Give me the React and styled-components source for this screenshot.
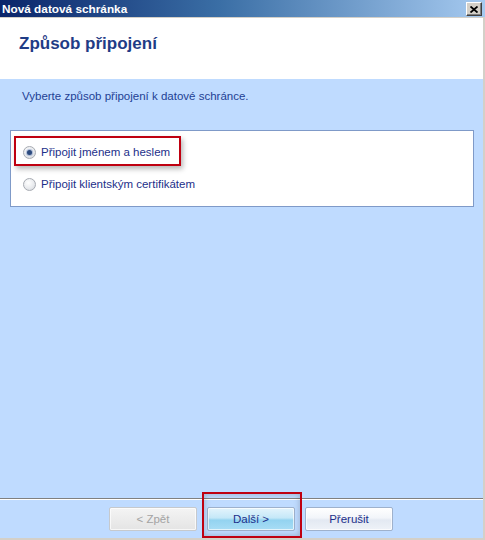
import React from 'react'
import styled, { createGlobalStyle } from 'styled-components'

const GlobalStyle = createGlobalStyle`
    html, body {
        margin: 0;
        padding: 0;
        background: #d4d0c8;
    }
    body {
        font-family: "Liberation Sans", Arial, sans-serif;
        font-size: 11.5px;
    }
`

const Window = styled.div`
    width: 485px;
    height: 540px;
    display: flex;
    flex-direction: column;
    background: #d4d0c8;
`

const TitleBar = styled.div`
    height: 17px;
    flex-shrink: 0;
    display: flex;
    align-items: center;
    justify-content: space-between;
    padding: 0 3px 0 2px;
    background: linear-gradient(to right, #0a246a 0%, #3a6ea5 45%, #a6caf0 100%);
    color: #ffffff;
    font-weight: bold;
    font-size: 11.8px;
`

const CloseButton = styled.div`
    width: 14px;
    height: 12px;
    margin-top: 1px;
    display: flex;
    align-items: center;
    justify-content: center;
    background: #d4d0c8;
    border-top: 1px solid #ffffff;
    border-left: 1px solid #ffffff;
    border-right: 1px solid #404040;
    border-bottom: 1px solid #404040;
    box-shadow: inset -1px -1px 0 #808080;
`

const Client = styled.div`
    flex: 1;
    display: flex;
    flex-direction: column;
    margin-top: 1px;
    margin-right: 2px;
    margin-bottom: 2px;
    background: #bfdbff;
`

const Header = styled.div`
    height: 61px;
    flex-shrink: 0;
    background: #ffffff;
    padding: 14px 0 0 19px;
    box-sizing: border-box;
`

const Heading = styled.h1`
    margin: 0;
    font-size: 17px;
    line-height: 24px;
    font-weight: bold;
    color: #1f3c86;
`

const Body = styled.div`
    flex: 1;
    display: flex;
    flex-direction: column;
    padding: 11px 9px 0 10px;
`

const Instruction = styled.p`
    margin: 0 0 0 12px;
    line-height: 13px;
    color: #1e3f94;
`

const OptionsPanel = styled.div`
    margin-top: 27px;
    background: #ffffff;
    border: 1px solid #7f9ac8;
    padding: 5px 3px 8px 3px;
    display: flex;
    flex-direction: column;
    gap: 2px;
`

const OptionRow = styled.label`
    display: flex;
    align-items: center;
    gap: 5px;
    align-self: flex-start;
    box-sizing: border-box;
    height: 30px;
    padding: 2px 9px 0 7px;
    border: 2px solid ${props => (props.$highlighted ? '#bf0010' : 'transparent')};
    box-shadow: ${props => (props.$highlighted ? '2px 3px 5px rgba(0, 0, 0, 0.28)' : 'none')};
    color: #1c2f8a;
`

const RadioDot = styled.span`
    width: 11px;
    height: 11px;
    border-radius: 50%;
    border: 1px solid #a7abb2;
    background: radial-gradient(circle at 40% 35%, #ffffff 0%, #e9ebee 55%, #cfd3d8 100%);
    display: flex;
    align-items: center;
    justify-content: center;
    flex-shrink: 0;

    &::after {
        content: '';
        width: 5px;
        height: 5px;
        border-radius: 50%;
        background: ${props => (props.$checked ? '#2c4a7e' : 'transparent')};
        box-shadow: ${props => (props.$checked ? '0 0 1px 1px rgba(80, 110, 170, 0.45)' : 'none')};
    }
`

const Footer = styled.div`
    height: 40px;
    flex-shrink: 0;
    box-sizing: border-box;
    border-top: 1px solid #808080;
    box-shadow: inset 0 1px 0 #ffffff;
    display: flex;
    align-items: flex-start;
    gap: 10px;
    padding: 8px 0 0 109px;
`

const ButtonWrap = styled.div`
    position: relative;
`

const Button = styled.button`
    width: 88px;
    height: 24px;
    box-sizing: border-box;
    border-radius: 2px;
    font-family: "Liberation Sans", Arial, sans-serif;
    font-size: 11.5px;
    padding: 0;
    border: 1px solid ${props => (props.disabled ? '#c6c9cd' : '#9eb1cc')};
    color: ${props => (props.disabled ? '#a3a3a3' : '#1c2f8a')};
    background: ${props =>
        props.disabled
            ? 'linear-gradient(to bottom, #f4f4f4 0%, #ececec 50%, #e4e4e4 100%)'
            : props.$focused
            ? 'linear-gradient(to bottom, #e4f4fc 0%, #c5e8f8 45%, #93d3f0 55%, #a8ddf5 100%)'
            : 'linear-gradient(to bottom, #ffffff 0%, #f2f5fa 45%, #e3e9f2 55%, #eef2f8 100%)'};
    box-shadow: inset 0 0 0 1px rgba(255, 255, 255, 0.7);
`

const Highlight = styled.div`
    position: absolute;
    left: -5px;
    top: -15px;
    width: 100px;
    height: 46px;
    box-sizing: border-box;
    border: 2px solid #bf0010;
    box-shadow: inset 0 0 6px rgba(0, 0, 0, 0.22);
    pointer-events: none;
`

export default function App() {
    return (
        <Window>
            <GlobalStyle />
            <TitleBar>
                <span>Nová datová schránka</span>
                <CloseButton>
                    <svg width="8" height="7" viewBox="0 0 8 7">
                        <path d="M0.5 0.5 L7.5 6.5 M7.5 0.5 L0.5 6.5" stroke="#000" strokeWidth="1.8" />
                    </svg>
                </CloseButton>
            </TitleBar>
            <Client>
                <Header>
                    <Heading>Způsob připojení</Heading>
                </Header>
                <Body>
                    <Instruction>Vyberte způsob připojení k datové schránce.</Instruction>
                    <OptionsPanel>
                        <OptionRow $highlighted>
                            <RadioDot $checked />
                            Připojit jménem a heslem
                        </OptionRow>
                        <OptionRow>
                            <RadioDot />
                            Připojit klientským certifikátem
                        </OptionRow>
                    </OptionsPanel>
                </Body>
                <Footer>
                    <Button disabled>&lt; Zpět</Button>
                    <ButtonWrap>
                        <Button $focused>Další &gt;</Button>
                        <Highlight />
                    </ButtonWrap>
                    <Button>Přerušit</Button>
                </Footer>
            </Client>
        </Window>
    )
}
